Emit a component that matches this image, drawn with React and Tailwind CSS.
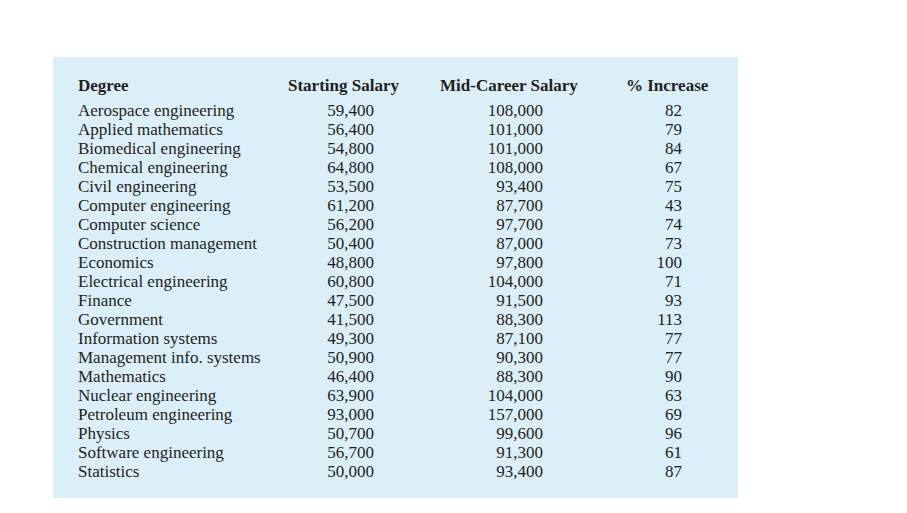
const rows = [
  ['Aerospace engineering', '59,400', '108,000', '82'],
  ['Applied mathematics', '56,400', '101,000', '79'],
  ['Biomedical engineering', '54,800', '101,000', '84'],
  ['Chemical engineering', '64,800', '108,000', '67'],
  ['Civil engineering', '53,500', '93,400', '75'],
  ['Computer engineering', '61,200', '87,700', '43'],
  ['Computer science', '56,200', '97,700', '74'],
  ['Construction management', '50,400', '87,000', '73'],
  ['Economics', '48,800', '97,800', '100'],
  ['Electrical engineering', '60,800', '104,000', '71'],
  ['Finance', '47,500', '91,500', '93'],
  ['Government', '41,500', '88,300', '113'],
  ['Information systems', '49,300', '87,100', '77'],
  ['Management info. systems', '50,900', '90,300', '77'],
  ['Mathematics', '46,400', '88,300', '90'],
  ['Nuclear engineering', '63,900', '104,000', '63'],
  ['Petroleum engineering', '93,000', '157,000', '69'],
  ['Physics', '50,700', '99,600', '96'],
  ['Software engineering', '56,700', '91,300', '61'],
  ['Statistics', '50,000', '93,400', '87'],
]

export default function App() {
  return (
    <div className="min-h-[513px] w-[907px] bg-white pt-[57px] pl-[53px] font-['Liberation_Serif',serif] text-[#231f20]">
      <div className="w-[685px] h-[441px] bg-[#dbeff9] pl-[25px] pt-[19px]">
        <div className="grid grid-cols-[210px_152px_186px_auto] text-[17px] leading-[19px] font-bold mb-[6px]">
          <div>Degree</div>
          <div>Starting Salary</div>
          <div>Mid-Career Salary</div>
          <div>% Increase</div>
        </div>
        <div className="grid grid-cols-[210px_152px_186px_auto] text-[17px] leading-[19px]">
          {rows.map((r) => (
            <div key={r[0]} className="contents">
              <div>{r[0]}</div>
              <div className="w-[86px] text-right">{r[1]}</div>
              <div className="w-[103px] text-right">{r[2]}</div>
              <div className="w-[56px] text-right">{r[3]}</div>
            </div>
          ))}
        </div>
      </div>
    </div>
  )
}
